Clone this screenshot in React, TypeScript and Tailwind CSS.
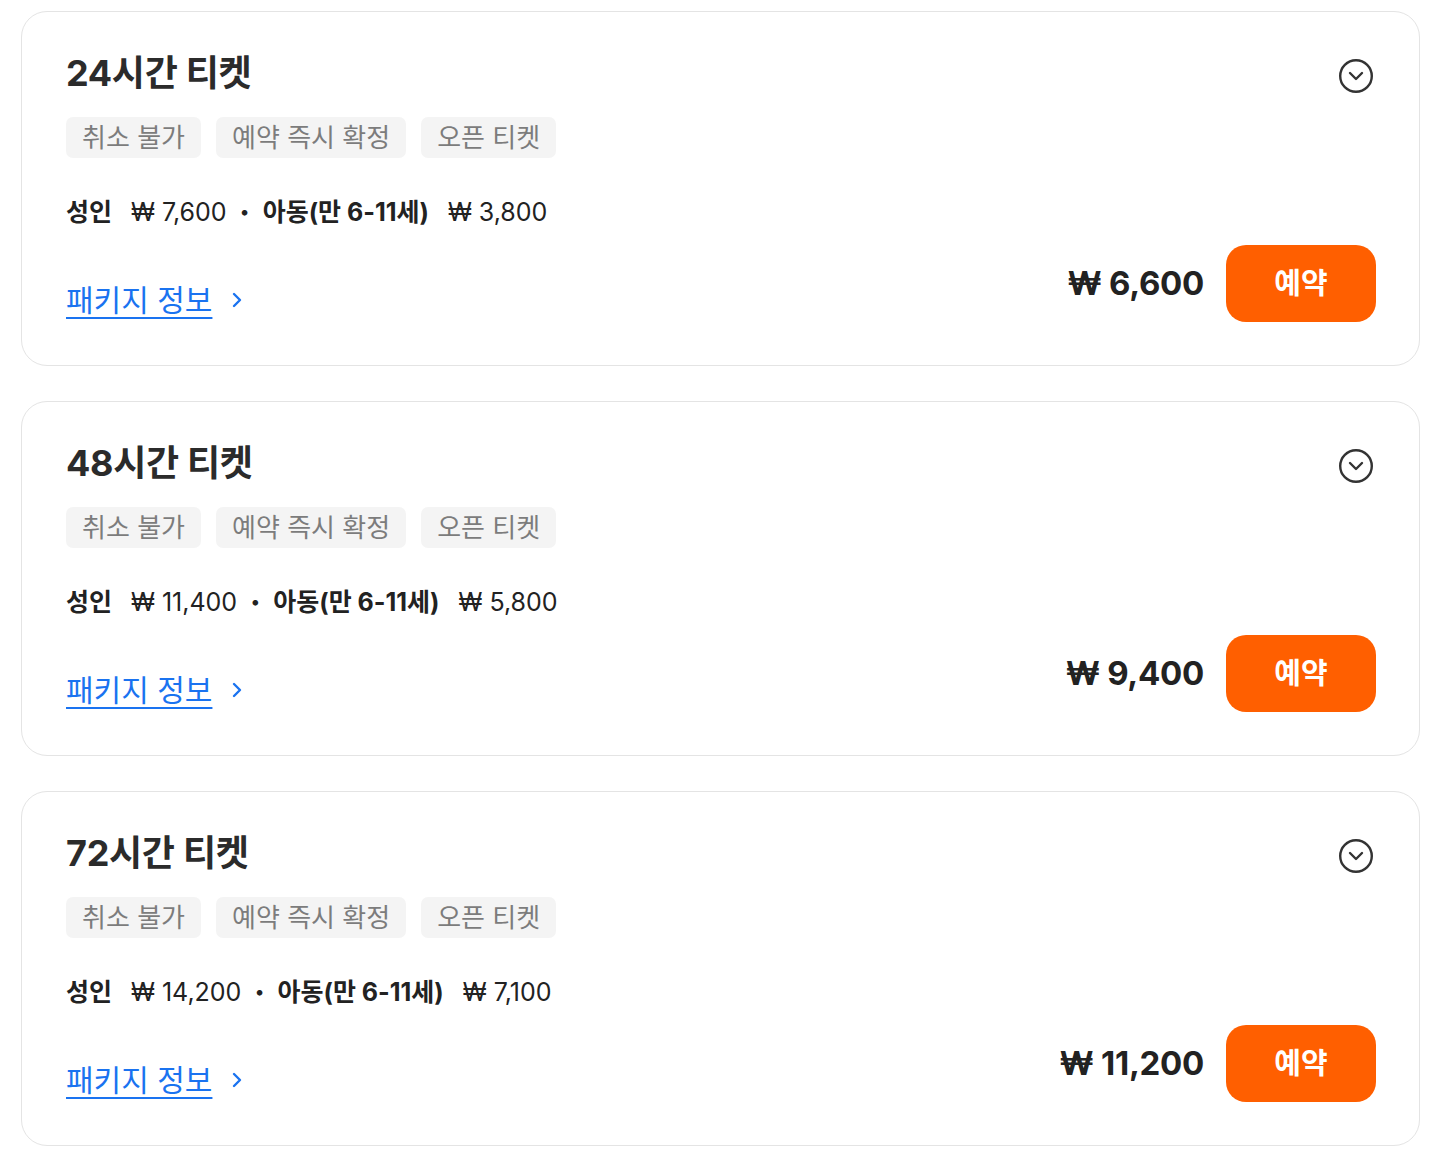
const font = "font-['Inter','Noto_Sans_CJK_KR',sans-serif]";

interface Ticket {
  hours: number;
  adult: string;
  child: string;
  price: string;
}

const tickets: Ticket[] = [
  { hours: 24, adult: "7,600", child: "3,800", price: "6,600" },
  { hours: 48, adult: "11,400", child: "5,800", price: "9,400" },
  { hours: 72, adult: "14,200", child: "7,100", price: "11,200" },
];

const tags = ["취소 불가", "예약 즉시 확정", "오픈 티켓"];

function ChevronCircle() {
  return (
    <svg width="36" height="36" viewBox="0 0 36 36" fill="none" stroke="#333" strokeWidth="2.4">
      <circle cx="18" cy="18" r="15.8" />
      <path d="M12 15 L18 21 L24 15" strokeLinecap="round" strokeLinejoin="round" />
    </svg>
  );
}

function TicketCard({ t }: { t: Ticket }) {
  return (
    <div className="rounded-[26px] border border-[#e4e4e4] bg-white pl-[44px] pr-[43px] pt-[36px] pb-[43px]">
      {/* ── Header ── */}
      <div className="flex items-start justify-between">
        <h2 className="text-[36px] leading-[50px] font-bold text-[#2b2b2b] tracking-[-0.3px]">
          {t.hours}시간 티켓
        </h2>
        <div className="pt-[10px] pr-[2px]">
          <ChevronCircle />
        </div>
      </div>

      {/* ── Tags ── */}
      <div className="mt-[19px] flex gap-[15px]">
        {tags.map((tag) => (
          <span
            key={tag}
            className="h-[41px] rounded-[7px] bg-[#f4f4f4] px-[16px] text-[26px] leading-[41px] text-[#7c7c7c]"
          >
            {tag}
          </span>
        ))}
      </div>

      {/* ── Prices ── */}
      <div className="mt-[34px] flex items-center text-[25px] leading-[40px] text-[#222]">
        <span className="font-bold">성인</span>
        <span className="ml-[19px]">₩ {t.adult}</span>
        <span className="mx-[13px] text-[18px]">•</span>
        <span className="font-bold">아동(만 6-11세)</span>
        <span className="ml-[19px]">₩ {t.child}</span>
      </div>

      {/* ── Footer ── */}
      <div className="mt-[13px] flex items-end justify-between">
        <a href="#" className="mb-[2px] flex items-center gap-[18px] text-[30px] leading-[40px] text-[#1a73f0]">
          <span className="underline underline-offset-[6px] decoration-[2px]">패키지 정보</span>
          <svg width="16" height="24" viewBox="0 0 16 24" fill="none" stroke="#1a73f0" strokeWidth="2.4">
            <path d="M4 6 L10 12 L4 18" strokeLinecap="round" strokeLinejoin="round" />
          </svg>
        </a>
        <div className="flex items-center gap-[22px]">
          <span className="text-[33px] font-bold text-[#222] tracking-[-0.3px]">₩ {t.price}</span>
          <button className="h-[77px] w-[150px] rounded-[20px] bg-[#ff5f00] text-[29px] font-bold text-white">
            예약
          </button>
        </div>
      </div>
    </div>
  );
}

export default function App() {
  return (
    <div className={`${font} min-h-screen bg-white px-[21px] pt-[11px] pb-[23px] w-[1441px]`}>
      <div className="flex flex-col gap-[35px]">
        {tickets.map((t) => (
          <TicketCard key={t.hours} t={t} />
        ))}
      </div>
    </div>
  );
}
